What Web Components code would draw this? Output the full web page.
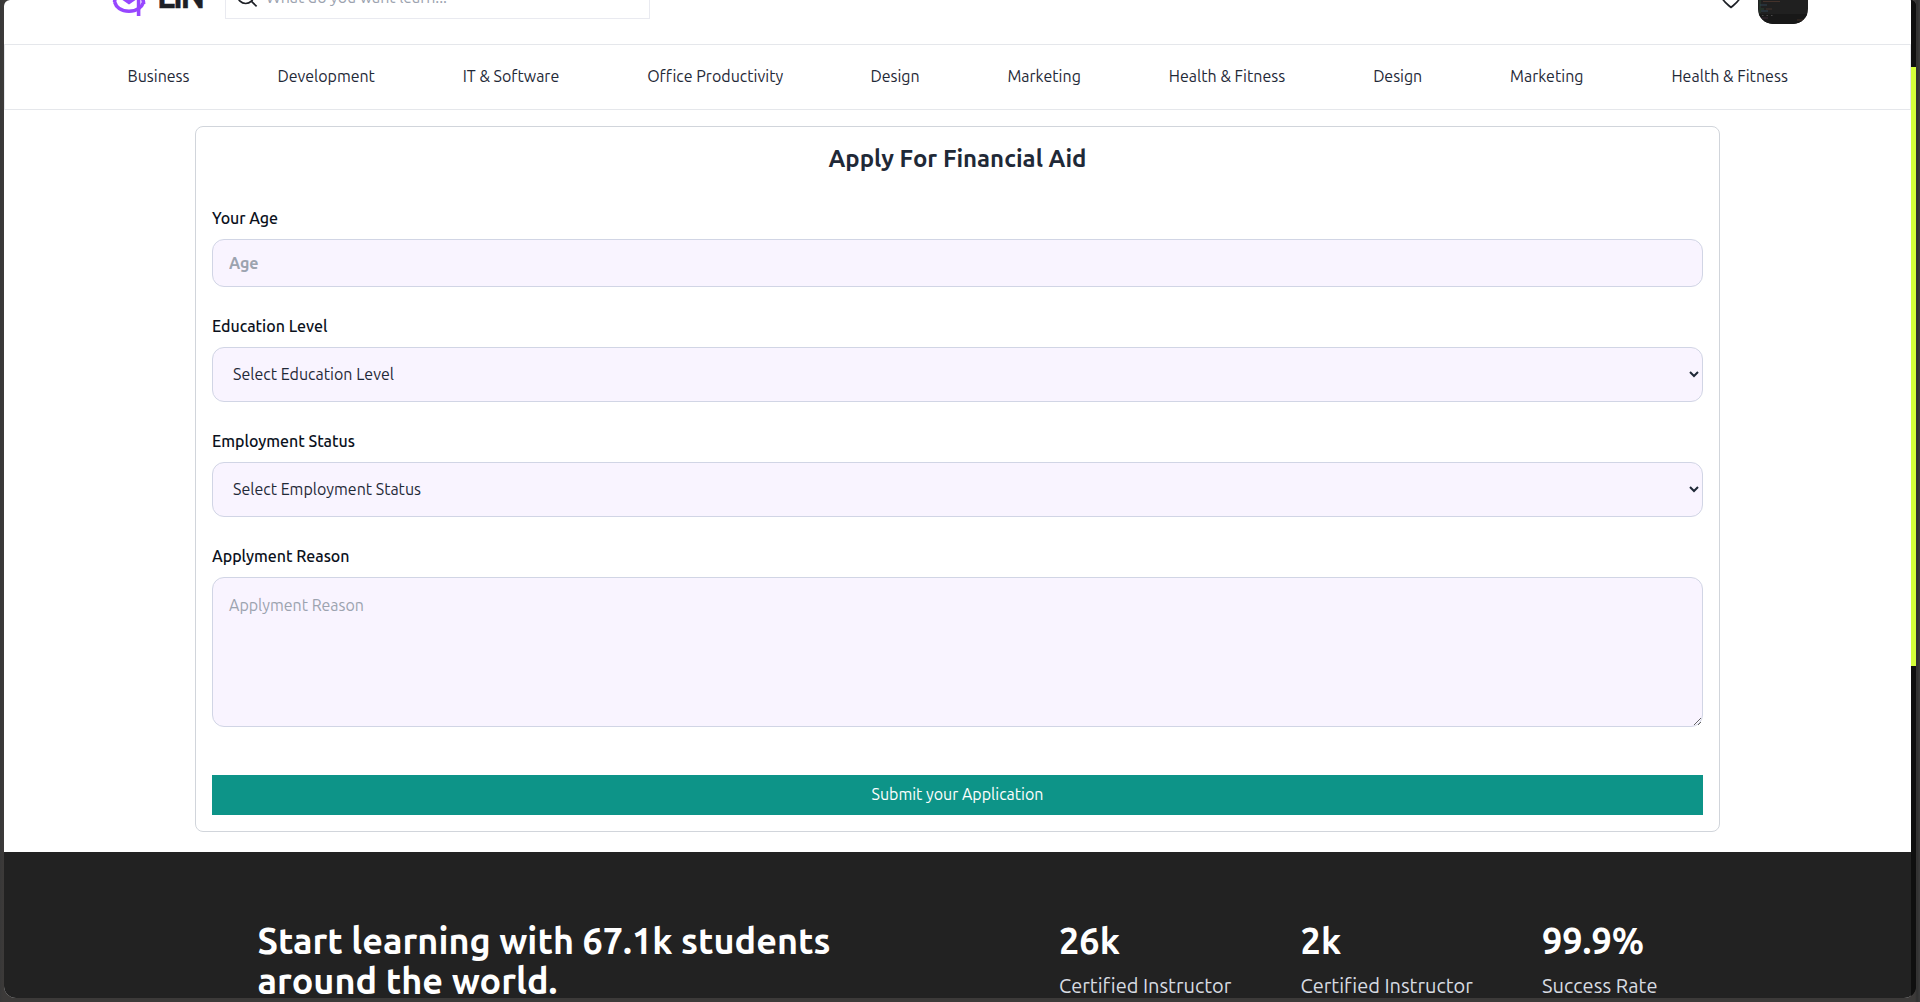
<!DOCTYPE html>
<html lang="en">
<head>
<meta charset="utf-8">
<title>Apply For Financial Aid</title>
<style>
html,body{margin:0;height:100%;overflow:hidden;background:#383838}
body{font-family:Ubuntu,"Noto Sans",sans-serif;font-size:16px;line-height:24px;color:#1f2937}
</style>
</head>
<body>
<app-window>
  <top-bar></top-bar>
  <category-nav></category-nav>
  <aid-form></aid-form>
  <stats-footer></stats-footer>
</app-window>
<script>
const ctx = document.createElement('canvas').getContext('2d');
// Letter spacing that gives a text the advance width asked for.
function spacing(text, weight, size, width) {
  ctx.font = `${weight} ${size}px Ubuntu, "Noto Sans", sans-serif`;
  return ((width - ctx.measureText(text).width) / text.length).toFixed(3) + 'px';
}
function define(name, html, setup) {
  const t = document.createElement('template');
  customElements.define(name, class extends HTMLElement {
    constructor() {
      super();
      t.innerHTML = html;
      this.attachShadow({mode: 'open'}).append(t.content.cloneNode(true));
    }
    connectedCallback() { if (setup) setup(this, this.shadowRoot); }
  });
}

define('fit-text', `<style>:host{display:inline-block;white-space:nowrap}</style><slot></slot>`, el => {
  const size = +el.getAttribute('size') || 16, weight = el.getAttribute('weight') || 400, w = +el.getAttribute('width');
  el.style.fontSize = size + 'px';
  el.style.fontWeight = weight;
  el.style.width = w + 'px';
  el.style.letterSpacing = spacing(el.textContent, weight, size, w);
});

define('app-window', `<style>
:host{display:flex;box-sizing:border-box;width:1920px;height:1002px;padding:0 4px 4px;background:linear-gradient(90deg,#383838 0,#3c3a39 3px,#3c3a39 1915px,#303030 1917px,#3c3c3c 1920px);overflow:hidden}
.frame{flex:1;display:flex;height:998px;border-radius:6px 6px 12px 12px;overflow:hidden;background:#0f0f0f}
.page{flex:0 0 1907px;height:998px;background:#fff;overflow:hidden;display:flex;flex-direction:column}
.track{flex:0 0 5px;display:flex;flex-direction:column;background:#0f0f0f}
.thumb{margin-top:67px;height:599px;background:#d4ff3a}
</style><div class="frame"><div class="page"><slot></slot></div><div class="track"><div class="thumb"></div></div></div>`);

define('top-bar', `<style>
:host{display:flex;flex:0 0 84px;margin-top:-40px;box-sizing:border-box;align-items:flex-end;padding:0 103px 0 108px}
.logo{display:block;width:34px;height:44px;margin-bottom:26px}
.name{margin:0 0 28px 11px;color:#1d2026;line-height:40px;-webkit-text-stroke:.4px #1d2026}
.search{display:flex;align-items:center;box-sizing:border-box;width:425px;height:49px;border:1px solid #e9eaf0;margin:0 0 25px 22px;padding:6px 11px 0}
.search svg{margin:0 8px 0 0}
.search fit-text{color:#9ca3af;position:relative;top:-1px}
.heart{display:block;margin:0 0 35px auto}
.avatar{display:block;margin:0 0 20px 16px;border-radius:15px}
</style>
<svg class="logo" viewBox="0 0 34 44" fill="none" stroke="#9747ff" stroke-width="3.6"><path d="M2.6 28C4 33 9 37.2 17 37.2S30 33 31.6 28M31.6 30C31.6 22 25 17 17 17S2.6 22 2.6 28"/><path d="M26.6 18V42"/><path d="M8 24L17 17L26 24"/><path d="M9 25L17 30.5L25 25Z" fill="#9747ff" stroke="none"/></svg>
<fit-text class="name" size="33" weight="700" width="46">LIN</fit-text>
<div class="search"><svg width="21" height="24" viewBox="0 0 21 24" fill="none" stroke="#1d2026" stroke-width="1.7"><circle cx="8.7" cy="9.5" r="8"/><path d="M14.5 15.4L19.6 20.4"/></svg><fit-text width="181">What do you want learn...</fit-text></div>
<svg class="heart" width="22" height="20" viewBox="0 0 22 20" fill="none" stroke="#1d2026" stroke-width="1.7" stroke-linejoin="round"><path d="M11 18.5C8 15.7 1 11 1 5.8A4.8 4.8 0 0 1 11 4.4A4.8 4.8 0 0 1 21 5.8C21 11 14 15.7 11 18.5Z"/></svg>
<svg class="avatar" width="50" height="50" viewBox="0 0 50 50"><path fill="#202020" d="M0 0h50v50H0z"/><path fill="#181818" d="M0 40h50v10H0z"/><g stroke-width="1" opacity=".5"><path stroke="#356544" d="M2 26v13M3 35h3"/><path stroke="#3c6684" d="M2 31h7M3 37h7"/><path stroke="#684536" d="M5 27.5h17M8 35h6M39 46h7"/><path stroke="#5b3a52" d="M4 44h6"/><path stroke="#777" stroke-dasharray="1.5 3" d="M4 41.5h11"/></g></svg>`);

const categories = [['Business',62],['Development',97.5],['IT & Software',96.5],['Office Productivity',135.5],['Design',49],['Marketing',73.5],['Health & Fitness',116.5],['Design',49],['Marketing',73.5],['Health & Fitness',116.5]];
define('category-nav', `<style>
:host{display:flex;flex:0 0 66px;box-sizing:border-box;border:1px solid #e5e7eb;justify-content:space-between;align-items:center;padding:0 122px 2px 122.5px;color:#1f2937}
</style>${categories.map(([t, w]) => `<fit-text width="${w}">${t.replace('&', '&amp;')}</fit-text>`).join('')}`);

define('form-field', `<style>
:host{display:flex;flex-direction:column;gap:8px}
.label{display:block;height:24px;line-height:22px}
</style><span class="label"><slot name="label"></slot></span><slot></slot>`);

define('aid-form', `<style>
:host{display:flex;flex:0 0 706px;box-sizing:border-box;flex-direction:column;width:1525px;margin:16px auto 20px;padding:16px;border:1px solid #d1d5db;border-radius:8px;gap:28px}
h2{margin:0;height:36px;line-height:32px;text-align:center;font-size:0;color:#1f2937}
form-field fit-text{color:#0b111c;line-height:22px}
input,select,textarea{display:block;box-sizing:border-box;width:100%;margin:0;border:1px solid #d1d5e5;border-radius:12px;background:#f9f4ff;font:400 16px/24px Ubuntu,"Noto Sans",sans-serif;color:#1f2937;outline:none}
input{height:48px;padding:0 16px 1px;font-weight:600}
select{height:55px;padding:0 16px 1px;color:#1f2937}
textarea{height:150px;padding:15px 16px}
::placeholder{color:#9ca3af;opacity:1}
button{margin-top:20px;height:40px;border:0;background:#0d9488;color:#fff;font:400 16px/24px Ubuntu,"Noto Sans",sans-serif;padding:0 0 3px}
</style>
<h2><fit-text size="24" weight="600" width="258">Apply For Financial Aid</fit-text></h2>
<form-field><fit-text slot="label" weight="500" width="66">Your Age</fit-text><input placeholder="Age" data-w="29.5" data-weight="600"></form-field>
<form-field><fit-text slot="label" weight="500" width="115.5">Education Level</fit-text><select data-w="161"><option>Select Education Level</option></select></form-field>
<form-field><fit-text slot="label" weight="500" width="143">Employment Status</fit-text><select data-w="188"><option>Select Employment Status</option></select></form-field>
<form-field><fit-text slot="label" weight="500" width="137.5">Applyment Reason</fit-text><textarea placeholder="Applyment Reason" data-w="135"></textarea></form-field>
<button type="button"><fit-text width="172">Submit your Application</fit-text></button>`, (el, root) => {
  root.querySelectorAll('[data-w]').forEach(c => {
    const text = c.placeholder || c.options[0].text;
    c.style.letterSpacing = spacing(text, c.dataset.weight || 400, 16, +c.dataset.w);
  });
});

define('stat-item', `<style>
:host{display:flex;flex-direction:column;width:241.5px;gap:8px;color:#fff;white-space:nowrap}
.l{color:#d8dce2;line-height:34px}
</style><slot></slot><span class="l"><slot name="label"></slot></span>`);

define('stats-footer', `<style>
:host{display:flex;flex:1 0 146px;box-sizing:border-box;background:#222;padding:69px 0 0 253.5px;color:#fff;line-height:40px;overflow:hidden}
.head{display:flex;flex-direction:column;width:801.5px}
.stats{display:flex}
</style>
<div class="head"><fit-text size="36" weight="600" width="573">Start learning with 67.1k students</fit-text><fit-text size="36" weight="600" width="300">around the world.</fit-text></div>
<div class="stats">
<stat-item><fit-text size="36" weight="600" width="61">26k</fit-text><fit-text slot="label" size="20" width="171.5">Certified Instructor</fit-text></stat-item>
<stat-item><fit-text size="36" weight="600" width="41">2k</fit-text><fit-text slot="label" size="20" width="171.5">Certified Instructor</fit-text></stat-item>
<stat-item><fit-text size="36" weight="600" width="102">99.9%</fit-text><fit-text slot="label" size="20" width="115.5">Success Rate</fit-text></stat-item>
</div>`);
</script>
</body>
</html>
